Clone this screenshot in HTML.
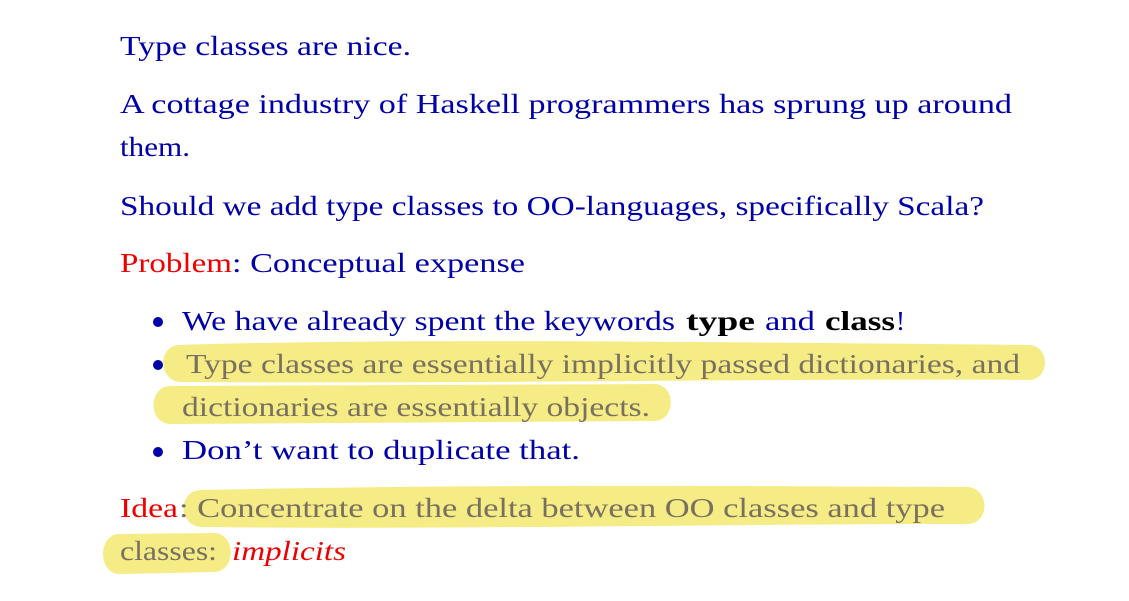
<!DOCTYPE html>
<html><head><style>body{margin:0;background:#fff}svg{display:block}text{font-family:"Liberation Serif","Times New Roman",serif;font-size:27px}</style></head><body>
<svg width="1129" height="601" xmlns="http://www.w3.org/2000/svg">
<g fill="#f5ec85">
<path d="M178,345 C400,338 700,342 1030,345 C1050,347 1050,378 1030,380 C800,378 500,384 180,382 C158,380 158,347 178,345Z"/>
<path d="M170,386 L655,384 C676,385 676,420 655,421 L170,424 C148,423 148,387 170,386Z"/>
<path d="M200,490 C500,484 700,486 968,487 C990,489 990,523 968,524 C700,524 450,530 200,527 C178,524 178,492 200,490Z"/>
<path d="M118,534 L215,533 C236,535 236,570 215,572 L118,574 C98,572 98,536 118,534Z"/>
</g>
<g fill="#0000a8">
<text x="120" y="55" textLength="291" lengthAdjust="spacingAndGlyphs">Type classes are nice.</text>
<text x="120" y="113" textLength="892" lengthAdjust="spacingAndGlyphs">A cottage industry of Haskell programmers has sprung up around</text>
<text x="120" y="156" textLength="70" lengthAdjust="spacingAndGlyphs">them.</text>
<text x="120" y="215" textLength="864" lengthAdjust="spacingAndGlyphs">Should we add type classes to OO-languages, specifically Scala?</text>
<text x="232" y="272" textLength="293" lengthAdjust="spacingAndGlyphs">: Conceptual expense</text>
<circle cx="158" cy="322" r="5"/><circle cx="158" cy="365" r="5"/><circle cx="158" cy="452" r="5"/>
<text x="182" y="330" textLength="493" lengthAdjust="spacingAndGlyphs">We have already spent the keywords</text>
<text x="686" y="330" font-weight="bold" fill="#000" textLength="69" lengthAdjust="spacingAndGlyphs">type</text>
<text x="765" y="330" textLength="50" lengthAdjust="spacingAndGlyphs">and</text>
<text x="825" y="330" font-weight="bold" fill="#000" textLength="70" lengthAdjust="spacingAndGlyphs">class</text>
<text x="896" y="330">!</text>
<text x="182" y="459" textLength="398" lengthAdjust="spacingAndGlyphs">Don’t want to duplicate that.</text>
</g>
<g fill="#ee0000">
<text x="120" y="272" textLength="112" lengthAdjust="spacingAndGlyphs">Problem</text>
<text x="120" y="517" textLength="58" lengthAdjust="spacingAndGlyphs">Idea</text>
<text x="232" y="560" font-style="italic" textLength="114" lengthAdjust="spacingAndGlyphs">implicits</text>
</g>
<g fill="#7a7060">
<text x="186" y="373" textLength="834" lengthAdjust="spacingAndGlyphs">Type classes are essentially implicitly passed dictionaries, and</text>
<text x="182" y="416" textLength="468" lengthAdjust="spacingAndGlyphs">dictionaries are essentially objects.</text>
<text x="179" y="517" textLength="766" lengthAdjust="spacingAndGlyphs">: Concentrate on the delta between OO classes and type</text>
<text x="120" y="560" textLength="97" lengthAdjust="spacingAndGlyphs">classes:</text>
</g>
</svg>
</body></html>
